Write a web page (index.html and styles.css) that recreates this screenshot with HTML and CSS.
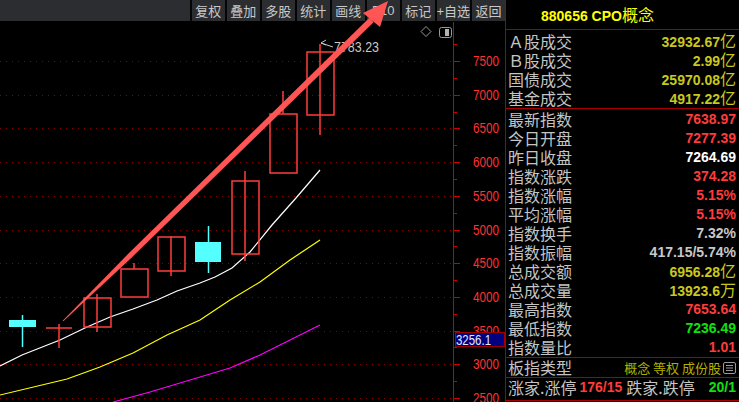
FILE: index.html
```html
<!DOCTYPE html>
<html lang="zh-CN">
<head>
<meta charset="utf-8">
<title>880656 CPO概念</title>
<link rel="stylesheet" href="styles.css">
</head>
<body>
<div class="screen">
  <section class="main">
    <nav class="toolbar">
      <div class="tb-fill"></div>
      <span class="tb-btn">复权</span>
      <span class="tb-btn">叠加</span>
      <span class="tb-btn">多股</span>
      <span class="tb-btn">统计</span>
      <span class="tb-btn">画线</span>
      <span class="tb-btn latin">F10</span>
      <span class="tb-btn">标记</span>
      <span class="tb-btn">+自选</span>
      <span class="tb-btn">返回</span>
    </nav>

    <svg class="chart" width="505" height="381" viewBox="0 21 505 381">
      <!-- price grid, one dotted line per 500 points -->
      <g class="grid">
        <line x1="0" x2="452" y1="61.5" y2="61.5"/>
        <line x1="0" x2="452" y1="95.5" y2="95.5"/>
        <line x1="0" x2="452" y1="128.5" y2="128.5"/>
        <line x1="0" x2="452" y1="162.5" y2="162.5"/>
        <line x1="0" x2="452" y1="196.5" y2="196.5"/>
        <line x1="0" x2="452" y1="230.5" y2="230.5"/>
        <line x1="0" x2="452" y1="263.5" y2="263.5"/>
        <line x1="0" x2="452" y1="297.5" y2="297.5"/>
        <line x1="0" x2="452" y1="331.5" y2="331.5"/>
        <line x1="0" x2="452" y1="364.5" y2="364.5"/>
        <line x1="0" x2="452" y1="398.5" y2="398.5"/>
      </g>

      <!-- moving averages -->
      <polyline class="ma ma-white" points="0,366 22,355 60,340 87,327 110,317 133,309 157,300 177,291 200,283 215,277 232,268 250,252 272,225 296,198 320,170"/>
      <polyline class="ma ma-yellow" points="0,395 67,379 100,367 133,353 167,335 200,320 230,300 260,282 290,260 320,240"/>
      <polyline class="ma ma-magenta" points="113,402 150,392 200,377 230,368 260,355 290,340 320,325"/>

      <!-- daily candles -->
      <g class="candle-down">
        <line x1="22.5" x2="22.5" y1="315" y2="347"/>
        <rect x="9" y="320" width="27" height="7"/>
        <line x1="208.5" x2="208.5" y1="226" y2="273"/>
        <rect x="195" y="242" width="26" height="20"/>
      </g>
      <g class="candle-up">
        <line x1="46" x2="72" y1="328" y2="328"/>
        <line x1="59" x2="59" y1="324" y2="348"/>

        <line x1="97" x2="97" y1="294" y2="332"/>
        <rect x="84" y="298" width="27" height="29"/>

        <line x1="134" x2="134" y1="263" y2="269"/>
        <rect x="121" y="269" width="27" height="28"/>

        <line x1="171" x2="171" y1="236" y2="276"/>
        <rect x="158" y="237" width="27" height="34"/>

        <line x1="245" x2="245" y1="171" y2="261"/>
        <rect x="232" y="181" width="27" height="73"/>

        <line x1="283" x2="283" y1="91" y2="114"/>
        <rect x="270" y="114" width="27" height="59"/>

        <line x1="320" x2="320" y1="44" y2="135"/>
        <rect x="307" y="52" width="27" height="63"/>
      </g>

      <!-- high marker -->
      <polyline class="hi-mark" points="326,40 321,43 326,45"/>
      <line class="hi-mark" x1="321" y1="43" x2="333" y2="47"/>
      <text class="hi-text" x="334" y="52" textLength="45" lengthAdjust="spacingAndGlyphs">7783.23</text>

      <!-- view icons -->
      <path class="icon" d="M426 26.5 L431 31.5 L426 36.5 L421 31.5 Z"/>
      <rect class="icon" x="439.5" y="27.5" width="12" height="10" rx="2"/>
      <rect class="icon-fill" x="445" y="29" width="4" height="7"/>

      <!-- price axis -->
      <line class="axis" x1="453.5" x2="453.5" y1="22" y2="402"/>
      <g class="tick">
        <line x1="454" x2="460" y1="61.5" y2="61.5"/>
        <line x1="454" x2="460" y1="95.5" y2="95.5"/>
        <line x1="454" x2="460" y1="128.5" y2="128.5"/>
        <line x1="454" x2="460" y1="162.5" y2="162.5"/>
        <line x1="454" x2="460" y1="196.5" y2="196.5"/>
        <line x1="454" x2="460" y1="230.5" y2="230.5"/>
        <line x1="454" x2="460" y1="263.5" y2="263.5"/>
        <line x1="454" x2="460" y1="297.5" y2="297.5"/>
        <line x1="454" x2="460" y1="331.5" y2="331.5"/>
        <line x1="454" x2="460" y1="364.5" y2="364.5"/>
        <line x1="454" x2="460" y1="398.5" y2="398.5"/>
        <line x1="454" x2="457" y1="44.5" y2="44.5"/>
        <line x1="454" x2="457" y1="78.5" y2="78.5"/>
        <line x1="454" x2="457" y1="112.5" y2="112.5"/>
        <line x1="454" x2="457" y1="145.5" y2="145.5"/>
        <line x1="454" x2="457" y1="179.5" y2="179.5"/>
        <line x1="454" x2="457" y1="213.5" y2="213.5"/>
        <line x1="454" x2="457" y1="246.5" y2="246.5"/>
        <line x1="454" x2="457" y1="280.5" y2="280.5"/>
        <line x1="454" x2="457" y1="314.5" y2="314.5"/>
        <line x1="454" x2="457" y1="347.5" y2="347.5"/>
        <line x1="454" x2="457" y1="381.5" y2="381.5"/>
      </g>
      <g class="axis-label">
        <text x="473" y="66" textLength="26" lengthAdjust="spacingAndGlyphs">7500</text>
        <text x="473" y="100" textLength="26" lengthAdjust="spacingAndGlyphs">7000</text>
        <text x="473" y="133" textLength="26" lengthAdjust="spacingAndGlyphs">6500</text>
        <text x="473" y="167" textLength="26" lengthAdjust="spacingAndGlyphs">6000</text>
        <text x="473" y="201" textLength="26" lengthAdjust="spacingAndGlyphs">5500</text>
        <text x="473" y="235" textLength="26" lengthAdjust="spacingAndGlyphs">5000</text>
        <text x="473" y="268" textLength="26" lengthAdjust="spacingAndGlyphs">4500</text>
        <text x="473" y="302" textLength="26" lengthAdjust="spacingAndGlyphs">4000</text>
        <text x="473" y="336" textLength="26" lengthAdjust="spacingAndGlyphs">3500</text>
        <text x="473" y="369" textLength="26" lengthAdjust="spacingAndGlyphs">3000</text>
        <text x="473" y="403" textLength="26" lengthAdjust="spacingAndGlyphs">2500</text>
      </g>

      <!-- cursor price tag -->
      <rect class="price-tag" x="455.5" y="332.5" width="49" height="14"/>
      <text class="price-tag-text" x="456" y="345" textLength="35" lengthAdjust="spacingAndGlyphs">3256.1</text>
    </svg>

    <!-- hand-drawn trend arrow, drawn over toolbar and chart -->
    <svg class="trend-arrow" width="505" height="402" viewBox="0 0 505 402">
      <polygon points="62.65,320.64 128.25,253.8 369.4,17.85 373.6,22.15 131.75,257.4 63.35,321.36"/>
      <polygon points="388,1 363,13 380,27"/>
    </svg>
  </section>

  <aside class="quote">
    <header class="quote-title">880656 CPO<span class="cjk">概念</span></header>

    <div class="group g-volume">
      <div class="row"><span class="lbl">Ａ股成交</span><span class="val yel">32932.67<i>亿</i></span></div>
      <div class="row"><span class="lbl">Ｂ股成交</span><span class="val yel">2.99<i>亿</i></span></div>
      <div class="row"><span class="lbl">国债成交</span><span class="val yel">25970.08<i>亿</i></span></div>
      <div class="row"><span class="lbl">基金成交</span><span class="val yel">4917.22<i>亿</i></span></div>
    </div>

    <div class="group g-index">
      <div class="row"><span class="lbl">最新指数</span><span class="val red">7638.97</span></div>
      <div class="row"><span class="lbl">今日开盘</span><span class="val red">7277.39</span></div>
      <div class="row"><span class="lbl">昨日收盘</span><span class="val wht">7264.69</span></div>
      <div class="row"><span class="lbl">指数涨跌</span><span class="val red">374.28</span></div>
      <div class="row"><span class="lbl">指数涨幅</span><span class="val red">5.15%</span></div>
      <div class="row"><span class="lbl">平均涨幅</span><span class="val red">5.15%</span></div>
      <div class="row"><span class="lbl">指数换手</span><span class="val gry">7.32%</span></div>
      <div class="row"><span class="lbl">指数振幅</span><span class="val gry">417.15/5.74%</span></div>
      <div class="row"><span class="lbl">总成交额</span><span class="val yel">6956.28<i>亿</i></span></div>
      <div class="row"><span class="lbl">总成交量</span><span class="val yel">13923.6<i>万</i></span></div>
      <div class="row"><span class="lbl">最高指数</span><span class="val red">7653.64</span></div>
      <div class="row"><span class="lbl">最低指数</span><span class="val grn">7236.49</span></div>
      <div class="row"><span class="lbl">指数量比</span><span class="val red">1.01</span></div>
    </div>

    <div class="group g-type">
      <div class="row">
        <span class="lbl">板指类型</span>
        <span class="tags"><span class="tag-text">概念 等权 成份股</span><svg class="list-icon" width="13" height="12" viewBox="0 0 13 12"><rect x="0.5" y="0.5" width="12" height="11" rx="1.5"/><line x1="3" x2="10" y1="3.5" y2="3.5"/><line x1="3" x2="10" y1="6" y2="6"/><line x1="3" x2="10" y1="8.5" y2="8.5"/></svg></span>
      </div>
    </div>

    <div class="group g-breadth">
      <div class="row breadth">
        <span class="lbl">涨家.涨停</span>
        <span class="val red">176/15</span>
        <span class="lbl fall">跌家.跌停</span>
        <span class="val grn push">20/1</span>
      </div>
    </div>
  </aside>
</div>
</body>
</html>
```

FILE: styles.css
```css
* {
  box-sizing: border-box;
}

html,
body {
  margin: 0;
  background: #000;
}

body {
  font-family: "Noto Sans CJK SC", sans-serif;
}

.screen {
  display: flex;
  width: 739px;
  height: 402px;
  overflow: hidden;
  background: #000;
}

/* ---------- left: toolbar + chart ---------- */

.main {
  position: relative;
  flex: 0 0 505px;
  display: flex;
  flex-direction: column;
}

.toolbar {
  display: flex;
  height: 21px;
  background: #2c2d31;
}

.tb-fill {
  flex: 1;
}

.tb-btn {
  flex: 0 0 35px;
  border-left: 2px solid #050505;
  color: #c8c8c8;
  font: 13px/21px "Noto Sans CJK SC", sans-serif;
  text-align: center;
  white-space: nowrap;
}

.tb-btn.latin {
  font-family: "Liberation Sans", "Noto Sans CJK SC", sans-serif;
}

.chart {
  display: block;
}

.grid line {
  stroke: #8c0000;
  stroke-width: 1;
  stroke-dasharray: 1 5;
}

.ma {
  fill: none;
  stroke-width: 1.2;
}

.ma-white {
  stroke: #ffffff;
}

.ma-yellow {
  stroke: #ffff00;
}

.ma-magenta {
  stroke: #ff00ff;
}

.candle-up line,
.candle-up rect {
  fill: none;
  stroke: #ff3c3c;
  stroke-width: 1.5;
}

.candle-down line {
  stroke: #54ffff;
  stroke-width: 1.5;
}

.candle-down rect {
  fill: #54ffff;
}

.hi-mark {
  fill: none;
  stroke: #c8c8c8;
  stroke-width: 1;
}

.hi-text {
  fill: #c8c8c8;
  font: 14px "Liberation Sans", sans-serif;
}

.icon {
  fill: none;
  stroke: #9a9a9a;
  stroke-width: 1;
}

.icon-fill {
  fill: #b4b4b4;
}

.axis {
  stroke: #cc0000;
  stroke-width: 1;
}

.tick line {
  stroke: #cc0000;
  stroke-width: 1;
}

.axis-label text {
  fill: #ff3232;
  font: 14px "Liberation Sans", sans-serif;
}

.price-tag {
  fill: #000080;
  stroke: #a00000;
  stroke-width: 1;
}

.price-tag-text {
  fill: #e6e6ff;
  font: 14px "Liberation Sans", sans-serif;
}

.trend-arrow {
  position: absolute;
  left: 0;
  top: 0;
  pointer-events: none;
}

.trend-arrow polygon {
  fill: #ff5555;
}

/* ---------- right: quote panel ---------- */

.quote {
  flex: 0 0 234px;
  display: flex;
  flex-direction: column;
  border-left: 1px solid #a80000;
}

.quote-title {
  height: 30px;
  padding-left: 35px;
  border-bottom: 1px solid #a80000;
  color: #ffff00;
  font: bold 14px/29px "Liberation Sans", sans-serif;
}

.quote-title .cjk {
  font: 16px/29px "Noto Sans CJK SC", sans-serif;
}

.group {
  border-bottom: 1px solid #a80000;
}

.g-volume {
  padding-top: 2px;
}

.g-index {
  padding-top: 1px;
}

.g-breadth {
  padding-bottom: 3px;
}

.row {
  display: flex;
  align-items: center;
  justify-content: space-between;
  height: 19px;
  padding: 0 3px 0 2px;
}

.lbl {
  color: #c4c4c4;
  font: 16px/19px "Noto Sans CJK SC", sans-serif;
  white-space: nowrap;
}

.val {
  font: bold 14px/19px "Liberation Sans", sans-serif;
  white-space: nowrap;
}

.val i {
  font: normal 16px/19px "Noto Sans CJK SC", sans-serif;
}

.yel {
  color: #c8c81e;
}

.red {
  color: #ff3b3b;
}

.wht {
  color: #ffffff;
}

.gry {
  color: #c8c8c8;
}

.grn {
  color: #10e010;
}

.tags {
  display: flex;
  align-items: center;
  gap: 2px;
}

.tag-text {
  color: #b0b000;
  font: 13px/19px "Noto Sans CJK SC", sans-serif;
  white-space: nowrap;
}

.list-icon {
  display: block;
}

.list-icon rect,
.list-icon line {
  fill: none;
  stroke: #9a9a9a;
  stroke-width: 1;
}

.breadth {
  justify-content: flex-start;
}

.breadth .val {
  margin-left: 3px;
}

.breadth .fall {
  margin-left: 4px;
}

.breadth .push {
  margin-left: auto;
}
```
